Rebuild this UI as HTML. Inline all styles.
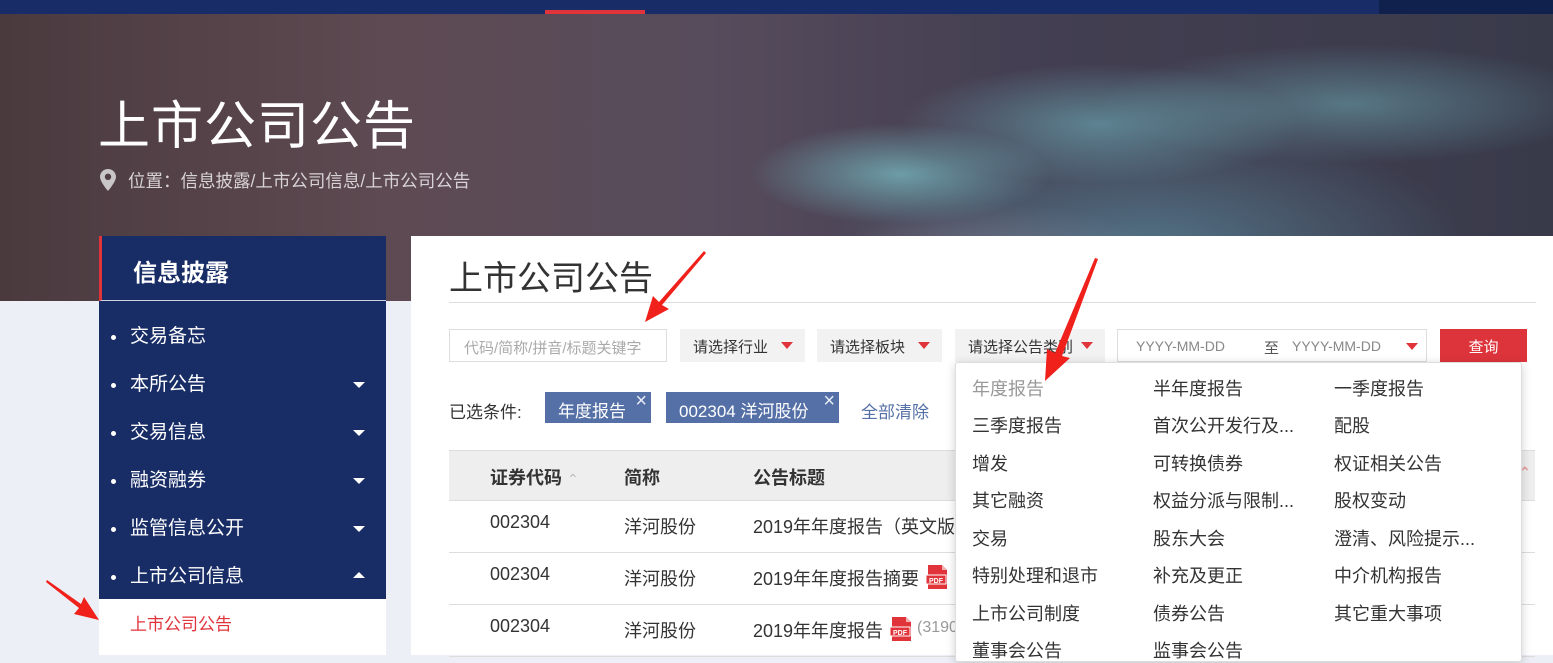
<!DOCTYPE html>
<html><head><meta charset="utf-8"><style>
*{margin:0;padding:0;box-sizing:border-box}
body{width:1553px;height:655px;overflow:hidden;background:#eceff6;font-family:"Liberation Sans","Noto Sans CJK SC",sans-serif;position:relative;color:#333}
.top{position:absolute;left:0;top:0;width:1553px;height:14px;background:#182d68}
.top .dk{position:absolute;left:1379px;top:0;width:174px;height:14px;background:#10214d}
.top .red{position:absolute;left:545px;top:10px;width:100px;height:4px;background:#e0333a}
.banner{position:absolute;left:0;top:14px;width:1553px;height:287px;
background:
radial-gradient(ellipse 70px 45px at 760px 270px,rgba(150,235,240,.85),transparent),
radial-gradient(ellipse 150px 50px at 900px 160px,rgba(130,215,220,.6),transparent),
radial-gradient(ellipse 200px 60px at 1100px 110px,rgba(120,200,210,.5),transparent),
radial-gradient(ellipse 250px 60px at 1350px 90px,rgba(120,190,200,.45),transparent),
radial-gradient(ellipse 320px 120px at 1150px 230px,rgba(90,140,160,.65),transparent),
radial-gradient(ellipse 160px 50px at 1000px 240px,rgba(180,140,160,.4),transparent),
linear-gradient(90deg,#4a3a3e 0%,#5e4a52 25%,#574c5c 45%,#443f52 65%,#383a4a 100%)}
.banner h1{position:absolute;left:98px;top:70px;font-size:52px;font-weight:normal;color:#fff;letter-spacing:1px}
.banner .loc{position:absolute;left:100px;top:154px;font-size:17.5px;color:#d8d3d6}
.banner .loc span{margin-left:28px}
.side{position:absolute;left:99px;top:236px;width:287px;height:419px;background:#182d66}
.side .hd{height:65px;border-left:3px solid #e0333a;border-bottom:1px solid #cfd3e0;color:#fff;font-size:24px;font-weight:bold;padding:17px 0 0 31px}
.side ul{list-style:none;margin-top:6px}
.side li{height:48px;color:#fff;font-size:19px;position:relative;padding:14px 0 0 31px}
.side li:before{content:"";position:absolute;left:12px;top:28px;width:5px;height:5px;border-radius:50%;background:#fff}
.side li.c:after{content:"";position:absolute;right:21px;top:27px;border-left:6px solid transparent;border-right:6px solid transparent;border-top:6px solid #fff}
.side li.u:after{content:"";position:absolute;right:21px;top:25px;border-left:6px solid transparent;border-right:6px solid transparent;border-bottom:6px solid #fff}
.side .sub{position:absolute;left:0;top:363px;width:287px;height:56px;background:#fff;color:#e0333a;font-size:17px;padding:11px 0 0 31px}
.main{position:absolute;left:411px;top:236px;width:1142px;height:419px;background:#fff}
.abs{position:absolute}
.title{left:449px;top:251px;font-size:34px;color:#333}
.hr{left:449px;top:302px;width:1087px;height:1px;background:#ddd}
.inp{left:449px;top:329px;width:218px;height:33px;border:1px solid #ddd;color:#aaa;font-size:15px;padding:7px 0 0 14px}
.sel{top:329px;height:33px;background:#f2f2f2;font-size:15px;color:#333;padding:7px 0 0 13px}
.sel:after{content:"";position:absolute;right:12px;top:13px;border-left:6px solid transparent;border-right:6px solid transparent;border-top:7px solid #e0333a}
.date{left:1117px;top:329px;width:310px;height:33px;border:1px solid #ddd;font-size:14px;color:#888}
.date:after{content:"";position:absolute;right:8px;top:13px;border-left:6px solid transparent;border-right:6px solid transparent;border-top:7px solid #e0333a}
.btn{left:1440px;top:329px;width:87px;height:33px;background:#dd343c;color:#fff;font-size:15px;text-align:center;padding-top:7px}
.lbl{left:449px;top:398px;font-size:17px;color:#333}
.tag{top:392px;height:31px;background:#5470a6;color:#fff;font-size:17px;padding:5px 0 0 13px}
.tag i{position:absolute;right:4px;top:-2px;font-style:normal;font-size:20px;color:#e8ecf5}
.clr{left:861px;top:398px;font-size:17px;color:#5470a6}
.th{left:449px;top:450px;width:1086px;height:51px;background:#eee;border-top:1px solid #ddd;border-bottom:1px solid #ddd}
.th span{position:absolute;top:13px;font-size:18px;font-weight:bold;color:#333}
.row{left:449px;width:1086px;height:52px;border-bottom:1px solid #ddd}
.row span{position:absolute;top:12px;font-size:18px;color:#333}
.row span.n{top:11px}
.dd{left:955px;top:362px;width:567px;height:300px;background:#fff;border:1px solid #ddd;border-radius:3px;box-shadow:0 2px 10px rgba(0,0,0,.18)}
.dd span{position:absolute;font-size:18px;color:#333;margin-top:-3px}
</style></head><body>
<div class="top"><div class="dk"></div><div class="red"></div></div>
<div class="banner">
<h1>上市公司公告</h1>
<div class="loc"><svg style="position:absolute;left:0;top:1px" width="16" height="22" viewBox="0 0 16 22"><path d="M8 0C3.6 0 0 3.4 0 7.8 0 13 8 22 8 22s8-9 8-14.2C16 3.4 12.4 0 8 0zm0 11a3.2 3.2 0 1 1 0-6.4A3.2 3.2 0 0 1 8 11z" fill="#c9c6c8"/></svg><span>位置：信息披露/上市公司信息/上市公司公告</span></div>
</div>
<div class="main"></div>
<div class="side">
<div class="hd">信息披露</div>
<ul><li>交易备忘</li><li class="c">本所公告</li><li class="c">交易信息</li><li class="c">融资融券</li><li class="c">监管信息公开</li><li class="u">上市公司信息</li></ul>
<div class="sub">上市公司公告</div>
</div>
<div class="abs title">上市公司公告</div>
<div class="abs hr"></div>
<div class="abs inp">代码/简称/拼音/标题关键字</div>
<div class="abs sel" style="left:680px;width:125px">请选择行业</div>
<div class="abs sel" style="left:817px;width:125px">请选择板块</div>
<div class="abs sel" style="left:955px;width:150px">请选择公告类别</div>
<div class="abs date"><span class="abs" style="left:18px;top:8px">YYYY-MM-DD</span><span class="abs" style="left:146px;top:7px;color:#555;font-size:15px">至</span><span class="abs" style="left:174px;top:8px">YYYY-MM-DD</span></div>
<div class="abs btn">查询</div>
<div class="abs lbl">已选条件:</div>
<div class="abs tag" style="left:545px;width:106px">年度报告<i>×</i></div>
<div class="abs tag" style="left:666px;width:173px">002304 洋河股份<i>×</i></div>
<div class="abs clr">全部清除</div>
<div class="abs th"><span style="left:41px">证券代码 <b style="font-weight:normal;color:#bbb;font-size:14px">⌃</b></span><span style="left:175px">简称</span><span style="left:304px">公告标题</span><span style="left:1070px;color:#e8a0a0;font-size:14px">⌃</span></div>
<div class="abs row" style="top:501px"><span class="n" style="left:41px">002304</span><span style="left:175px">洋河股份</span><span style="left:304px">2019年年度报告（英文版）</span></div>
<div class="abs row" style="top:553px"><span class="n" style="left:41px">002304</span><span style="left:175px">洋河股份</span><span style="left:304px">2019年年度报告摘要</span>
<svg class="abs" style="left:477px;top:12px" width="22" height="24" viewBox="0 0 22 24"><path d="M2 0h14l5 5v19H2z" fill="#e0333a"/><path d="M16 0v5h5z" fill="#f5b0b0"/><rect x="0" y="10" width="20" height="9" fill="#e0333a" stroke="#fff" stroke-width="1"/><text x="10" y="18" font-size="7" font-family="Liberation Sans" fill="#fff" text-anchor="middle" font-weight="bold">PDF</text></svg></div>
<div class="abs row" style="top:605px"><span class="n" style="left:41px">002304</span><span style="left:175px">洋河股份</span><span style="left:304px">2019年年度报告</span>
<svg class="abs" style="left:441px;top:12px" width="22" height="24" viewBox="0 0 22 24"><path d="M2 0h14l5 5v19H2z" fill="#e0333a"/><path d="M16 0v5h5z" fill="#f5b0b0"/><rect x="0" y="10" width="20" height="9" fill="#e0333a" stroke="#fff" stroke-width="1"/><text x="10" y="18" font-size="7" font-family="Liberation Sans" fill="#fff" text-anchor="middle" font-weight="bold">PDF</text></svg><span style="left:468px;color:#999;font-size:16px;top:14px">(3190</span></div>
<div class="abs dd">
<span style="left:16px;top:15px;color:#999">年度报告</span><span style="left:197px;top:15px">半年度报告</span><span style="left:378px;top:15px">一季度报告</span>
<span style="left:16px;top:52px">三季度报告</span><span style="left:197px;top:52px">首次公开发行及...</span><span style="left:378px;top:52px">配股</span>
<span style="left:16px;top:90px">增发</span><span style="left:197px;top:90px">可转换债券</span><span style="left:378px;top:90px">权证相关公告</span>
<span style="left:16px;top:127px">其它融资</span><span style="left:197px;top:127px">权益分派与限制...</span><span style="left:378px;top:127px">股权变动</span>
<span style="left:16px;top:165px">交易</span><span style="left:197px;top:165px">股东大会</span><span style="left:378px;top:165px">澄清、风险提示...</span>
<span style="left:16px;top:202px">特别处理和退市</span><span style="left:197px;top:202px">补充及更正</span><span style="left:378px;top:202px">中介机构报告</span>
<span style="left:16px;top:240px">上市公司制度</span><span style="left:197px;top:240px">债券公告</span><span style="left:378px;top:240px">其它重大事项</span>
<span style="left:16px;top:277px">董事会公告</span><span style="left:197px;top:277px">监事会公告</span>
</div>
<svg class="abs" style="left:0;top:0" width="1553" height="655">
<polygon points="706,253 662,305 669,309 645,322 653,296 659,302 704,251" fill="#f0201a"/>
<polygon points="1098,259 1062,356 1070,358 1045,381 1047,349 1055,353 1095,258" fill="#f0201a"/>
<polygon points="47,580 81,604 84,597 99,620 74,614 79,608 46,582" fill="#f0201a"/>
</svg>
</body></html>
